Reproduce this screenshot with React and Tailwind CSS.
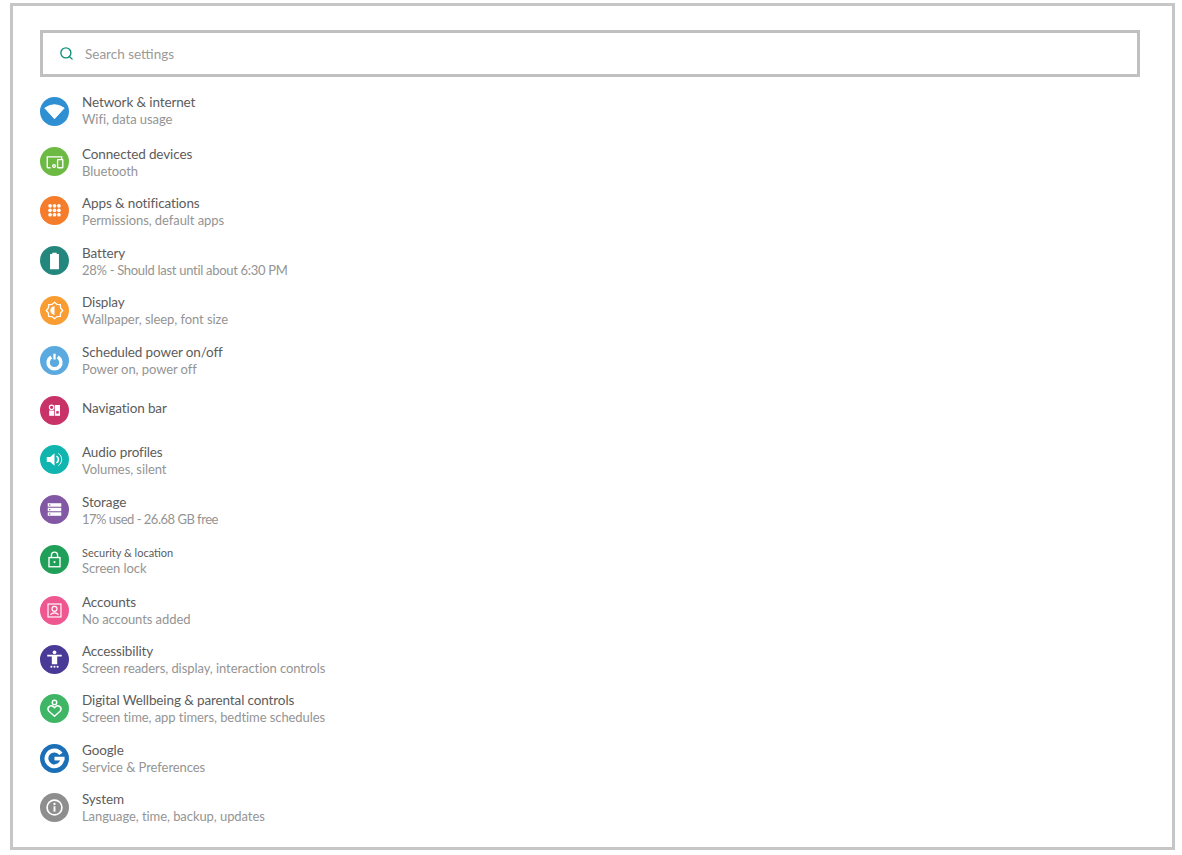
import { Search } from 'lucide-react';

const Wifi = () => <path d="M5 11.5Q15 4.5 25 11.5L15 22.5Z" fill="#fff" stroke="#fff" strokeWidth="1" strokeLinejoin="round" />;

const Devices = () => (
    <g fill="none" stroke="#fff" strokeWidth="1.4">
        <path d="M7.5 21.5V10.2H22.5V12.5" />
        <rect x="18.2" y="13" width="5.4" height="8.5" rx="0.5" />
        <circle cx="14.5" cy="19.7" r="1.4" />
        <path d="M7.5 21.5H11" />
    </g>
);

const Apps = () => (
    <g fill="#fff">
        {[10.2, 14.8, 19.4].map((y) =>
            [10.4, 15, 19.6].map((x) => <circle key={`${x}-${y}`} cx={x} cy={y} r="1.9" />)
        )}
    </g>
);

const Battery = () => <path d="M12.7 7H17.3V8.3H19.6V24H10.4V8.3H12.7Z" fill="#fff" />;

const Sun = () => (
    <g>
        <path
            d="M15 6.5L17.6 8.7L21 8.9L21.3 12.3L23.5 15L21.3 17.7L21 21.1L17.6 21.3L15 23.5L12.4 21.3L9 21.1L8.7 17.7L6.5 15L8.7 12.3L9 8.9L12.4 8.7Z"
            fill="none"
            stroke="#fff"
            strokeWidth="1.4"
        />
        <path d="M15 10.7A4.3 4.3 0 0 0 15 19.3Z" fill="#fff" />
    </g>
);

const Power = () => (
    <g fill="none" stroke="#fff">
        <path d="M11.7 11.3A6.6 6.6 0 1 0 18.3 11.3" strokeWidth="3.6" />
        <path d="M15 8V14" strokeWidth="2.4" />
    </g>
);

const Nav = () => (
    <g>
        <circle cx="12" cy="11.7" r="2.3" fill="none" stroke="#fff" strokeWidth="1.2" />
        <rect x="9.5" y="15" width="5" height="5.5" fill="#fff" />
        <path d="M15.3 9.3H20.7V20.5H15.3Z" fill="#fff" />
        <rect x="16.8" y="15.6" width="2.6" height="2.6" fill="#c93267" />
    </g>
);

const Speaker = () => (
    <g>
        <path d="M7 12.5H10.5L15 8.5V21.5L10.5 17.5H7Z" fill="#fff" />
        <path d="M17 11.5A4 4 0 0 1 17 18.5" fill="none" stroke="#fff" strokeWidth="1.7" />
        <path d="M19 8.7A7.5 7.5 0 0 1 19 21.3" fill="none" stroke="#fff" strokeWidth="1" />
    </g>
);

const Storage = () => (
    <g>
        {[8.5, 13.2, 17.9].map((y) => (
            <g key={y}>
                <rect x="8" y={y} width="14" height="3.6" fill="#fff" />
                <rect x="9.4" y={y + 1.2} width="1.3" height="1.3" fill="#8257a4" />
            </g>
        ))}
    </g>
);

const Lock = () => (
    <g fill="none" stroke="#fff" strokeWidth="1.4">
        <rect x="9.3" y="13" width="11.4" height="9.5" />
        <path d="M11.8 13V10.5A3.2 3.2 0 0 1 18.2 10.5V13" />
        <circle cx="15" cy="17.7" r="1.1" fill="#fff" stroke="none" />
    </g>
);

const Account = () => (
    <g fill="none" stroke="#fff" strokeWidth="1.2">
        <rect x="8.3" y="8.3" width="13.4" height="13.4" />
        <circle cx="15" cy="13.3" r="2.6" />
        <path d="M10.7 19.3Q15 15.6 19.3 19.3" />
    </g>
);

const Figure = () => (
    <g fill="#fff">
        <circle cx="15" cy="7.6" r="1.9" />
        <path d="M7.5 10.2H22.5V11.9H17.8V19.8H12.2V11.9H7.5Z" />
        <circle cx="11.8" cy="22.5" r="1.1" />
        <circle cx="15" cy="22.5" r="1.1" />
        <circle cx="18.2" cy="22.5" r="1.1" />
    </g>
);

const Wellbeing = () => (
    <g fill="none" stroke="#fff" strokeWidth="1.5">
        <circle cx="15" cy="8.7" r="2.3" />
        <path d="M15 23L8.7 17.3A3.4 3.4 0 0 1 13.8 13L15 14.3L16.2 13A3.4 3.4 0 0 1 21.3 17.3Z" strokeLinejoin="round" />
    </g>
);

const GoogleG = () => (
    <g>
        <path d="M21.6 10.2A8.2 8.2 0 1 0 23 16" fill="none" stroke="#fff" strokeWidth="4" />
        <rect x="15" y="13.2" width="10.4" height="3.8" fill="#fff" />
    </g>
);

const Info = () => (
    <g>
        <circle cx="15" cy="15" r="7.7" fill="none" stroke="#fff" strokeWidth="1.7" />
        <circle cx="15" cy="11.4" r="1.2" fill="#fff" />
        <rect x="14" y="13.7" width="2" height="5.6" fill="#fff" />
    </g>
);

const rows = [
    { title: 'Network & internet', sub: 'Wifi, data usage', bg: 'bg-[#2f8fd3]', Icon: Wifi, row: 'h-[52px]', nudge: 'mt-[4px]' },
    { title: 'Connected devices', sub: 'Bluetooth', bg: 'bg-[#6cb944]', Icon: Devices, row: 'h-[49px]', nudge: 'mt-[2px]' },
    { title: 'Apps & notifications', sub: 'Permissions, default apps', bg: 'bg-[#f47c2a]', Icon: Apps, row: 'h-[50px]', nudge: 'mt-[2px]' },
    { title: 'Battery', sub: '28% - Should last until about 6:30 PM', track: 'tracking-[-0.3px]', bg: 'bg-[#23877d]', Icon: Battery, row: 'h-[49px]', nudge: 'mt-[2px]' },
    { title: 'Display', sub: 'Wallpaper, sleep, font size', bg: 'bg-[#f99d33]', Icon: Sun, row: 'h-[50px]', nudge: 'mt-[3px]' },
    { title: 'Scheduled power on/off', sub: 'Power on, power off', bg: 'bg-[#5aa9df]', Icon: Power, row: 'h-[56px]', nudge: 'mt-[3px]' },
    { title: 'Navigation bar', bg: 'bg-[#c93267]', Icon: Nav, row: 'h-[44px]', nudge: '-mt-[3px]' },
    { title: 'Audio profiles', sub: 'Volumes, silent', bg: 'bg-[#0fb5ae]', Icon: Speaker, row: 'h-[50px]', nudge: 'mt-[2px]' },
    { title: 'Storage', sub: '17% used - 26.68 GB free', track: 'tracking-[-0.5px]', bg: 'bg-[#8257a4]', Icon: Storage, row: 'h-[51px]', nudge: 'mt-[2px]' },
    { title: 'Security & location', sub: 'Screen lock', small: true, bg: 'bg-[#1f9f58]', Icon: Lock, row: 'h-[49px]', nudge: 'mt-[1px]' },
    { title: 'Accounts', sub: 'No accounts added', bg: 'bg-[#ef5791]', Icon: Account, row: 'h-[49px]', nudge: 'mt-[3px]' },
    { title: 'Accessibility', sub: 'Screen readers, display, interaction controls', bg: 'bg-[#4a3a98]', Icon: Figure, row: 'h-[49px]', nudge: 'mt-[3px]' },
    { title: 'Digital Wellbeing & parental controls', sub: 'Screen time, app timers, bedtime schedules', bg: 'bg-[#3fb566]', Icon: Wellbeing, row: 'h-[50px]', nudge: 'mt-[3px]' },
    { title: 'Google', sub: 'Service & Preferences', bg: 'bg-[#1b6fb7]', Icon: GoogleG, row: 'h-[49px]', nudge: 'mt-[3px]' },
    { title: 'System', sub: 'Language, time, backup, updates', bg: 'bg-[#8e8e8e]', Icon: Info, row: 'h-[50px]', nudge: 'mt-[3px]' },
];

const SettingsRow = ({ title, sub, track, small, bg, Icon, row, nudge }) => (
    <div className={`flex items-start gap-[13px] ${row}`}>
        <div className={`w-[29px] h-[29px] shrink-0 rounded-full ${bg} ${nudge}`}>
            <svg viewBox="0 0 30 30" className="w-[29px] h-[29px]">
                <Icon />
            </svg>
        </div>
        <div>
            <div className={`h-[17px] leading-[17px] text-[#5c5c5c] ${small ? 'text-[11px]' : 'mt-[1px] text-[13.5px] tracking-[-0.12px]'}`}>{title}</div>
            {sub && (
                <div className={`h-[17px] leading-[17px] text-[13px] text-[#949494] ${track || 'tracking-[-0.07px]'} ${small ? '-mt-[1px]' : 'mt-0'}`}>{sub}</div>
            )}
        </div>
    </div>
);

export default function App() {
    return (
        <div className="w-[1182px] h-[855px] bg-white pt-[3px] pl-[10px] font-['Lato',sans-serif]">
            <div className="w-[1165px] h-[847px] border-[3px] border-[#c6c6c6] pt-[24px] px-[27px]">
                <div className="w-[1100px] h-[47px] border-[3px] border-[#c0c0c0] flex items-center pl-[16px] gap-[11px]">
                    <Search size={15} strokeWidth={2.2} className="text-[#12907c]" />
                    <span className="mt-[1px] text-[13.5px] text-[#9a9a9a]">Search settings</span>
                </div>
                <div className="mt-[16px]">
                    {rows.map((r) => (
                        <SettingsRow key={r.title} {...r} />
                    ))}
                </div>
            </div>
        </div>
    );
}
